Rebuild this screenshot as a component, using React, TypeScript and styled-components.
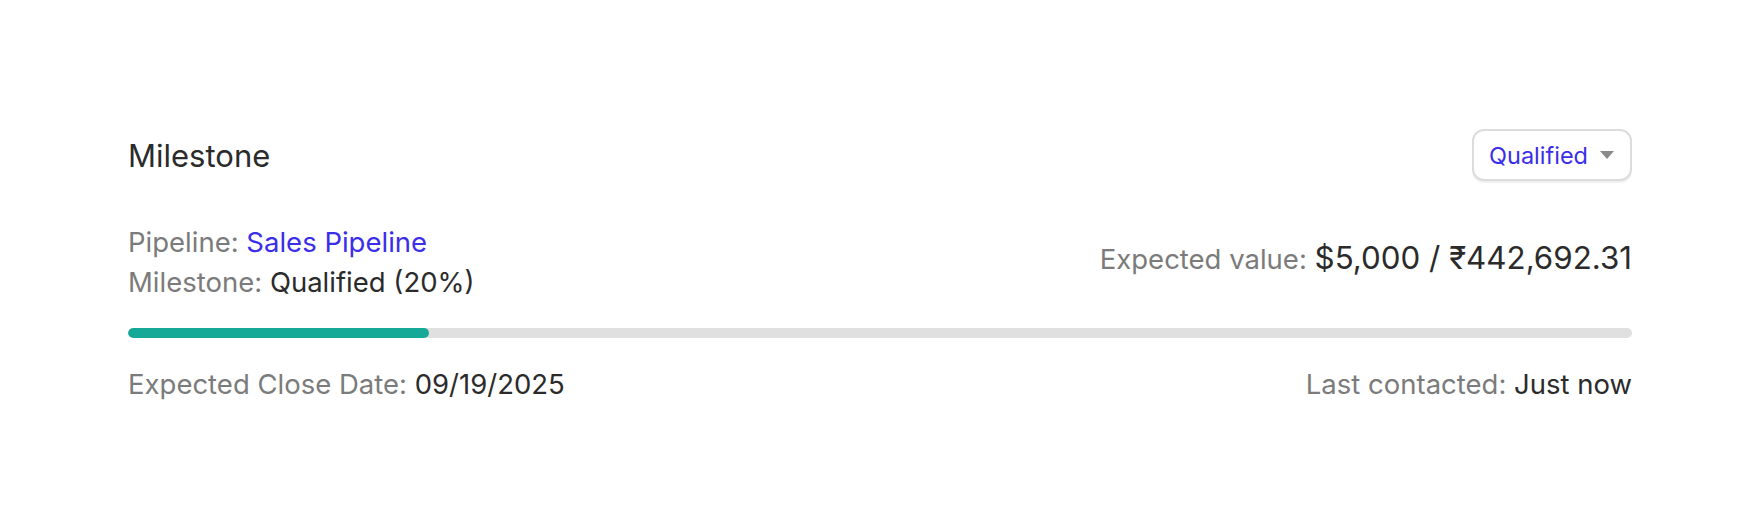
import styled, {createGlobalStyle} from 'styled-components';

const GlobalStyle = createGlobalStyle`
  html, body {
    margin: 0;
    padding: 0;
    background: #ffffff;
  }

  body {
    font-family: Inter, "Noto Sans", "Liberation Sans", sans-serif;
    color: #2b2b2b;
  }
`;

const colors = {
  text: '#2b2b2b',
  muted: '#7b7b7b',
  link: '#3a2ee8',
  track: '#e0e0e0',
  fill: '#17a998',
  border: '#dcdcdc',
};

const Card = styled.section`
  padding: 129px 128px 0;
  display: flex;
  flex-direction: column;
`;

const HeaderRow = styled.div`
  display: flex;
  align-items: center;
  justify-content: space-between;
`;

const Title = styled.h2`
  margin: 0;
  font-size: 31px;
  font-weight: 400;
  color: ${colors.text};
`;

const StageButton = styled.button`
  display: flex;
  align-items: center;
  gap: 12px;
  height: 52px;
  padding: 0 16px 0 15px;
  background: #fff;
  border: 2px solid ${colors.border};
  border-radius: 12px;
  box-shadow: 0 2px 1px rgba(0, 0, 0, 0.06);
  font-family: inherit;
  font-size: 23.5px;
  color: ${colors.link};
  cursor: pointer;
`;

const InfoRow = styled.div`
  display: flex;
  align-items: center;
  justify-content: space-between;
  margin-top: 41px;
`;

const Lines = styled.div`
  display: flex;
  flex-direction: column;
`;

const Line = styled.div<{lift?: boolean}>`
  font-size: 27.5px;
  line-height: 40px;
  color: ${colors.muted};
  white-space: nowrap;
  padding-bottom: ${({lift}) => (lift ? '7px' : '0')};
`;

const Value = styled.span<{tone?: 'link' | 'text'; big?: boolean}>`
  color: ${({tone}) => (tone === 'link' ? colors.link : colors.text)};
  font-size: ${({big}) => (big ? '31.3px' : 'inherit')};
`;

const Track = styled.div`
  margin-top: 26px;
  height: 10px;
  border-radius: 5px;
  background: ${colors.track};
  overflow: hidden;
`;

const Fill = styled.div`
  height: 100%;
  border-radius: 5px;
  background: ${colors.fill};
`;

const FooterRow = styled.div`
  display: flex;
  justify-content: space-between;
  margin-top: 26px;
`;

const Caret = () => (
  <svg width="14" height="8" viewBox="0 0 14 8">
    <path d="M0 0 H14 L7 8 Z" fill="#8a8a8a" />
  </svg>
);

export default function App() {
  const progress = 20;

  return (
    <>
      <GlobalStyle />
      <Card>
        <HeaderRow>
          <Title>Milestone</Title>
          <StageButton>
            Qualified
            <Caret />
          </StageButton>
        </HeaderRow>
        <InfoRow>
          <Lines>
            <Line>
              Pipeline: <Value tone="link">Sales Pipeline</Value>
            </Line>
            <Line>
              Milestone: <Value>Qualified (20%)</Value>
            </Line>
          </Lines>
          <Line lift>
            Expected value: <Value big>$5,000 / ₹442,692.31</Value>
          </Line>
        </InfoRow>
        <Track>
          <Fill style={{width: `${progress}%`}} />
        </Track>
        <FooterRow>
          <Line>
            Expected Close Date: <Value>09/19/2025</Value>
          </Line>
          <Line>
            Last contacted: <Value>Just now</Value>
          </Line>
        </FooterRow>
      </Card>
    </>
  );
}
